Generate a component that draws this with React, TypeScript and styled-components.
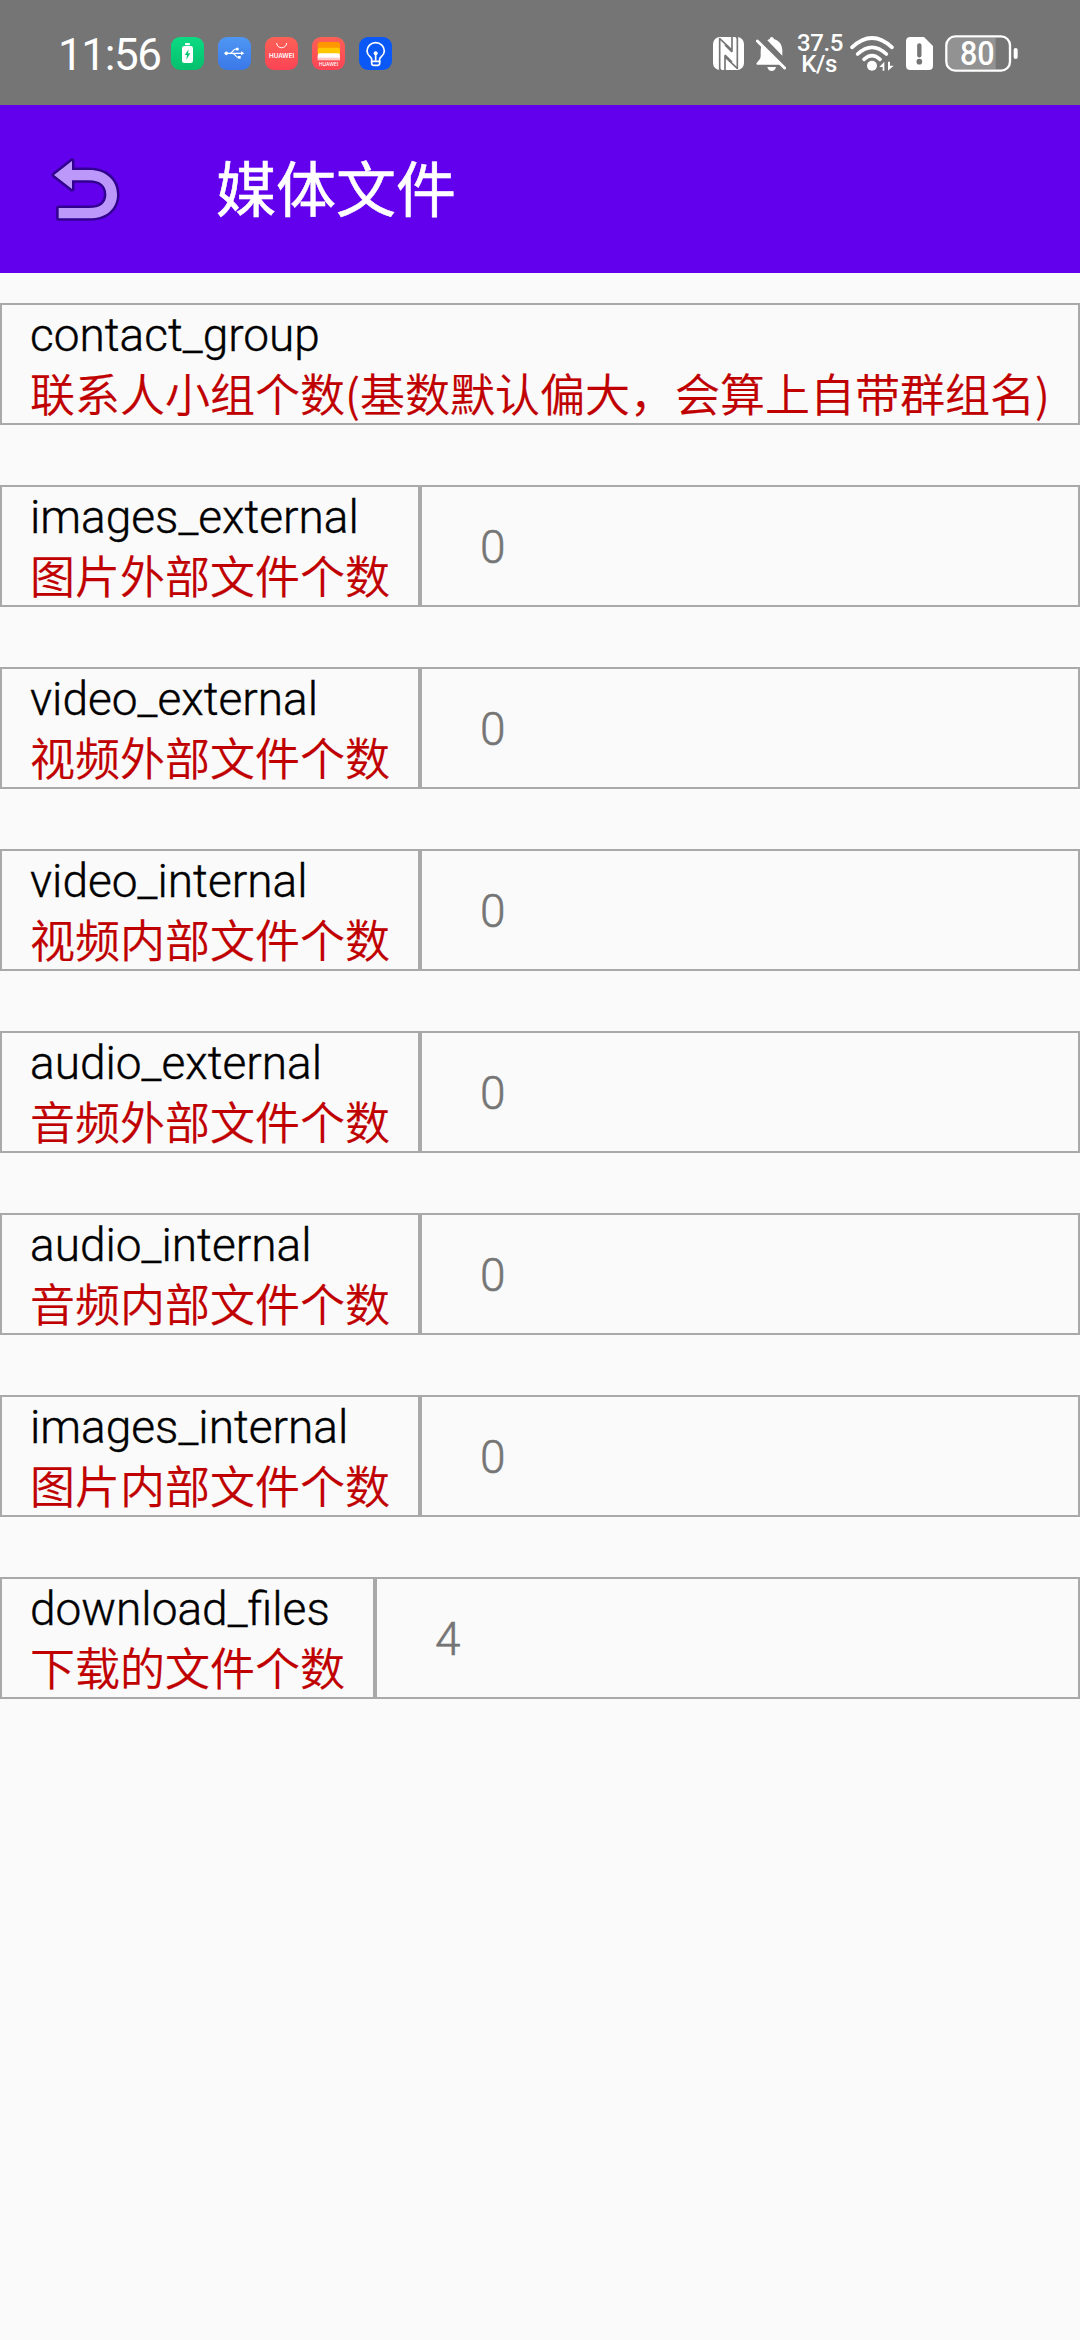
import React from 'react';
import styled, { createGlobalStyle } from 'styled-components';

const CJK = '"Noto Sans CJK SC", sans-serif';
const LATIN = '"Roboto", "Noto Sans CJK SC", sans-serif';

const GlobalStyle = createGlobalStyle`
  *, *::before, *::after { box-sizing: border-box; }
  body { margin: 0; background: #fafafa; }
`;

const Screen = styled.div`
  display: flex;
  flex-direction: column;
  width: 1080px;
  height: 2340px;
  overflow: hidden;
  background: #fafafa;
`;

const StatusBar = styled.header`
  display: flex;
  align-items: center;
  flex: none;
  height: 105px;
  padding: 2px 62px 0 58px;
  background: #757575;
  color: #fff;
`;

const Clock = styled.div`
  width: 113px;
  padding-top: 2px;
  font: 400 44px/52px ${LATIN};
  letter-spacing: -1.4px;
  white-space: nowrap;
`;

const AppIcons = styled.div`
  display: flex;
  gap: 14px;
`;

const AppIcon = styled.svg`
  display: block;
  width: 33px;
  height: 33px;
`;

const SystemIcons = styled.div`
  display: flex;
  align-items: center;
  margin-left: auto;
`;

const Glyph = styled.svg<{ $w: number; $h: number; $gap: number }>`
  display: block;
  flex: none;
  width: ${(p) => p.$w}px;
  height: ${(p) => p.$h}px;
  margin-right: ${(p) => p.$gap}px;
`;

const Speed = styled.div`
  width: 44px;
  margin-right: 9px;
  padding-top: 1px;
  font: 500 24px/21px ${LATIN};
  letter-spacing: -0.4px;
  text-align: center;
  white-space: nowrap;
`;

const Toolbar = styled.div`
  display: flex;
  align-items: center;
  flex: none;
  height: 168px;
  padding-left: 51px;
  background: #6200ee;
`;

const BackButton = styled.button`
  width: 69px;
  height: 63px;
  margin-right: 96px;
  padding: 0;
  border: 0;
  background: none;

  svg { display: block; overflow: visible; }
`;

const Title = styled.h1`
  margin: 0 0 7px;
  color: #fff;
  font: 400 60px/80px ${CJK};
  -webkit-text-stroke: 0.6px #fff;
`;

const List = styled.main`
  display: flex;
  flex-direction: column;
  gap: 60px;
  padding-top: 30px;
`;

const Row = styled.section`
  display: flex;
  height: 122px;
`;

const LabelCell = styled.div<{ $wide?: boolean }>`
  flex: ${(p) => (p.$wide ? '1 0 auto' : 'none')};
  padding: 0 28px;
  border: 2px solid #a9a9a9;
`;

const Key = styled.div`
  height: 59px;
  color: #000;
  font: 300 46px/60px ${LATIN};
  -webkit-text-stroke: 0.4px #000;
  white-space: nowrap;
`;

const Description = styled.div`
  height: 59px;
  color: #c00000;
  font: 350 45px/57px ${CJK};
  -webkit-text-stroke: 0.2px #c00000;
  white-space: nowrap;
`;

const ValueCell = styled.div`
  display: flex;
  flex: 1;
  align-items: center;
  padding: 2px 0 0 58px;
  border: 2px solid #a9a9a9;
  color: #757575;
  font: 300 46px/60px ${LATIN};
  -webkit-text-stroke: 0.5px #757575;
`;

interface Entry {
  name: string;
  description: string;
  value?: number;
}

const entries: Entry[] = [
  { name: 'contact_group', description: '联系人小组个数(基数默认偏大，会算上自带群组名)' },
  { name: 'images_external', description: '图片外部文件个数', value: 0 },
  { name: 'video_external', description: '视频外部文件个数', value: 0 },
  { name: 'video_internal', description: '视频内部文件个数', value: 0 },
  { name: 'audio_external', description: '音频外部文件个数', value: 0 },
  { name: 'audio_internal', description: '音频内部文件个数', value: 0 },
  { name: 'images_internal', description: '图片内部文件个数', value: 0 },
  { name: 'download_files', description: '下载的文件个数', value: 4 },
];

function NotificationIcons() {
  return (
    <AppIcons>
      <AppIcon viewBox="0 0 99 99">
        <defs>
          <linearGradient id="green" x1="0" y1="0" x2="0" y2="1">
            <stop offset="0" stopColor="#0bdb83" />
            <stop offset="1" stopColor="#06bf6d" />
          </linearGradient>
        </defs>
        <rect width="99" height="99" rx="27" fill="url(#green)" />
        <rect x="42" y="18" width="15" height="7" rx="3" fill="#fff" />
        <rect x="33" y="27" width="33" height="51" rx="7" fill="#fff" />
        <path d="M53 37 L41 54 H48 L46 68 L58 49 H51 Z" fill="#08c974" />
      </AppIcon>
      <AppIcon viewBox="0 0 99 99">
        <defs>
          <linearGradient id="blue" x1="0" y1="0" x2="0" y2="1">
            <stop offset="0" stopColor="#4f97f3" />
            <stop offset="1" stopColor="#3a78e8" />
          </linearGradient>
        </defs>
        <rect width="99" height="99" rx="27" fill="url(#blue)" />
        <g stroke="#fff" strokeWidth="3.5" fill="none">
          <path d="M25 49 H72 M35 49 C45 49 44 36 54 36 H57 M43 49 C53 49 52 61 60 61 H64" />
        </g>
        <g fill="#fff">
          <circle cx="25" cy="49" r="5.5" />
          <circle cx="58" cy="36" r="4.5" />
          <rect x="60" y="57" width="8" height="8" />
          <path d="M69 43 L79 49 L69 55 Z" />
        </g>
      </AppIcon>
      <AppIcon viewBox="0 0 99 99">
        <defs>
          <linearGradient id="red" x1="0" y1="0" x2="0" y2="1">
            <stop offset="0" stopColor="#fd6156" />
            <stop offset="1" stopColor="#fb4355" />
          </linearGradient>
        </defs>
        <rect width="99" height="99" rx="27" fill="url(#red)" />
        <path d="M35 18 C36 37 64 37 65 18" fill="none" stroke="#fff" strokeWidth="3" />
        <text x="50" y="63" textAnchor="middle" textLength="76" lengthAdjust="spacingAndGlyphs" fontFamily="Inter, sans-serif" fontWeight="600" fontSize="17" fill="#fff">HUAWEI</text>
      </AppIcon>
      <AppIcon viewBox="0 0 99 99">
        <rect width="99" height="99" rx="27" fill="url(#red)" />
        <rect x="17" y="15" width="67" height="30" rx="8" fill="#ff9800" />
        <rect x="17" y="32" width="67" height="24" rx="7" fill="#ffc800" />
        <rect x="17" y="49" width="67" height="20" rx="7" fill="#fff" />
        <path d="M17 62 H84 V70 H17 Z" fill="#ffc9c9" />
        <text x="50" y="87" textAnchor="middle" textLength="58" lengthAdjust="spacingAndGlyphs" fontFamily="Inter, sans-serif" fontWeight="500" fontSize="15" fill="#fff">HUAWEI</text>
      </AppIcon>
      <AppIcon viewBox="0 0 99 99">
        <rect width="99" height="99" rx="27" fill="#0a59f7" />
        <g stroke="#fff" strokeWidth="5" fill="none">
          <path d="M38 73 V66 C38 61 24 56 24 42 A26 25 0 0 1 76 42 C76 56 62 61 62 66 V73 Z" />
          <path d="M38 72 V79 Q38 85 44 85 H56 Q62 85 62 79 V72 M50 51 V71" />
        </g>
        <circle cx="50" cy="49" r="6" fill="#fff" />
      </AppIcon>
    </AppIcons>
  );
}

function DeviceIcons() {
  return (
    <SystemIcons>
      <Glyph $w={31} $h={33} $gap={12} viewBox="0 0 93 99">
        <rect width="93" height="99" rx="21" fill="#fff" />
        <g fill="none" stroke="#757575" strokeWidth="5">
          <path d="M20 3 V96 L24 99 M73 96 V3 L69 0" />
          <path d="M20 5 L57 39 V0 M73 94 L36 60 V99 M36 24 L57 45 M36 54 L57 75" />
        </g>
      </Glyph>
      <Glyph $w={30} $h={34} $gap={11} viewBox="0 0 90 102">
        <g fill="#fff">
          <path d="M34 10 Q38 7 41 6 Q42 0 47 0 Q52 0 54 6 Q76 12 79 38 V56 Z" />
          <path d="M16 26 L73 83 H4 Q0 83 2 78 L11 67 Q14 63 14 56 V42 Q14 34 16 26 Z" />
          <path d="M34 90 H60 Q57 102 47 102 Q37 102 34 90 Z" />
        </g>
        <path d="M4 12 L86 93" stroke="#fff" strokeWidth="9" strokeLinecap="round" />
      </Glyph>
      <Speed>
        37.5
        <br />
        K/s
      </Speed>
      <Glyph $w={44} $h={35} $gap={12} viewBox="0 0 132 105">
        <g fill="none" stroke="#fff" strokeWidth="11" strokeLinecap="round">
          <path d="M6 34 Q66 -22 126 34" />
          <path d="M23 54 Q66 14 109 54" />
          <path d="M42 70 Q66 48 90 70" />
        </g>
        <circle cx="66" cy="89" r="15" fill="#fff" />
        <path d="M88 93 L103 77 V104 H98 V93 Z M114 77 V104 L131 89 H120 V77 Z" fill="#fff" />
      </Glyph>
      <Glyph $w={27} $h={33} $gap={12} viewBox="0 0 81 99">
        <path d="M13 0 H54 L81 27 V86 Q81 99 68 99 H13 Q0 99 0 86 V13 Q0 0 13 0 Z" fill="#fff" />
        <path d="M40 25 V55" stroke="#757575" strokeWidth="13" strokeLinecap="round" />
        <circle cx="40" cy="74" r="8.5" fill="#757575" />
      </Glyph>
      <Glyph $w={73} $h={37} $gap={0} viewBox="0 0 219 111">
        <path d="M30 8 H152 V103 H30 Q8 103 8 81 V30 Q8 8 30 8 Z" fill="#929292" />
        <rect x="4" y="4" width="191" height="103" rx="27" fill="none" stroke="#fff" strokeWidth="7" />
        <rect x="206" y="39" width="12" height="33" rx="6" fill="#fff" />
        <text x="97" y="91" textAnchor="middle" textLength="104" lengthAdjust="spacingAndGlyphs" fontFamily="Roboto, sans-serif" fontWeight="500" fontSize="98" fill="#fff">80</text>
      </Glyph>
    </SystemIcons>
  );
}

export default function App() {
  return (
    <>
      <GlobalStyle />
      <Screen>
        <StatusBar>
          <Clock>11:56</Clock>
          <NotificationIcons />
          <DeviceIcons />
        </StatusBar>
        <Toolbar>
          <BackButton aria-label="返回">
            <svg width="69" height="63" viewBox="0 0 207 189">
              <path
                d="M9 51 L63 9 V36 H115 C165 36 198 67 198 110 C198 153 165 181 115 181 H23 V150 H115 C147 150 166 136 166 110 C166 82 147 67 115 67 H63 V93 Z"
                fill="#bb98fa"
                stroke="#31018f"
                strokeWidth="15"
                strokeLinejoin="round"
                paintOrder="stroke"
              />
            </svg>
          </BackButton>
          <Title>媒体文件</Title>
        </Toolbar>
        <List>
          {entries.map((entry) => (
            <Row key={entry.name}>
              <LabelCell $wide={entry.value === undefined}>
                <Key>{entry.name}</Key>
                <Description>{entry.description}</Description>
              </LabelCell>
              {entry.value !== undefined && <ValueCell>{entry.value}</ValueCell>}
            </Row>
          ))}
        </List>
      </Screen>
    </>
  );
}
